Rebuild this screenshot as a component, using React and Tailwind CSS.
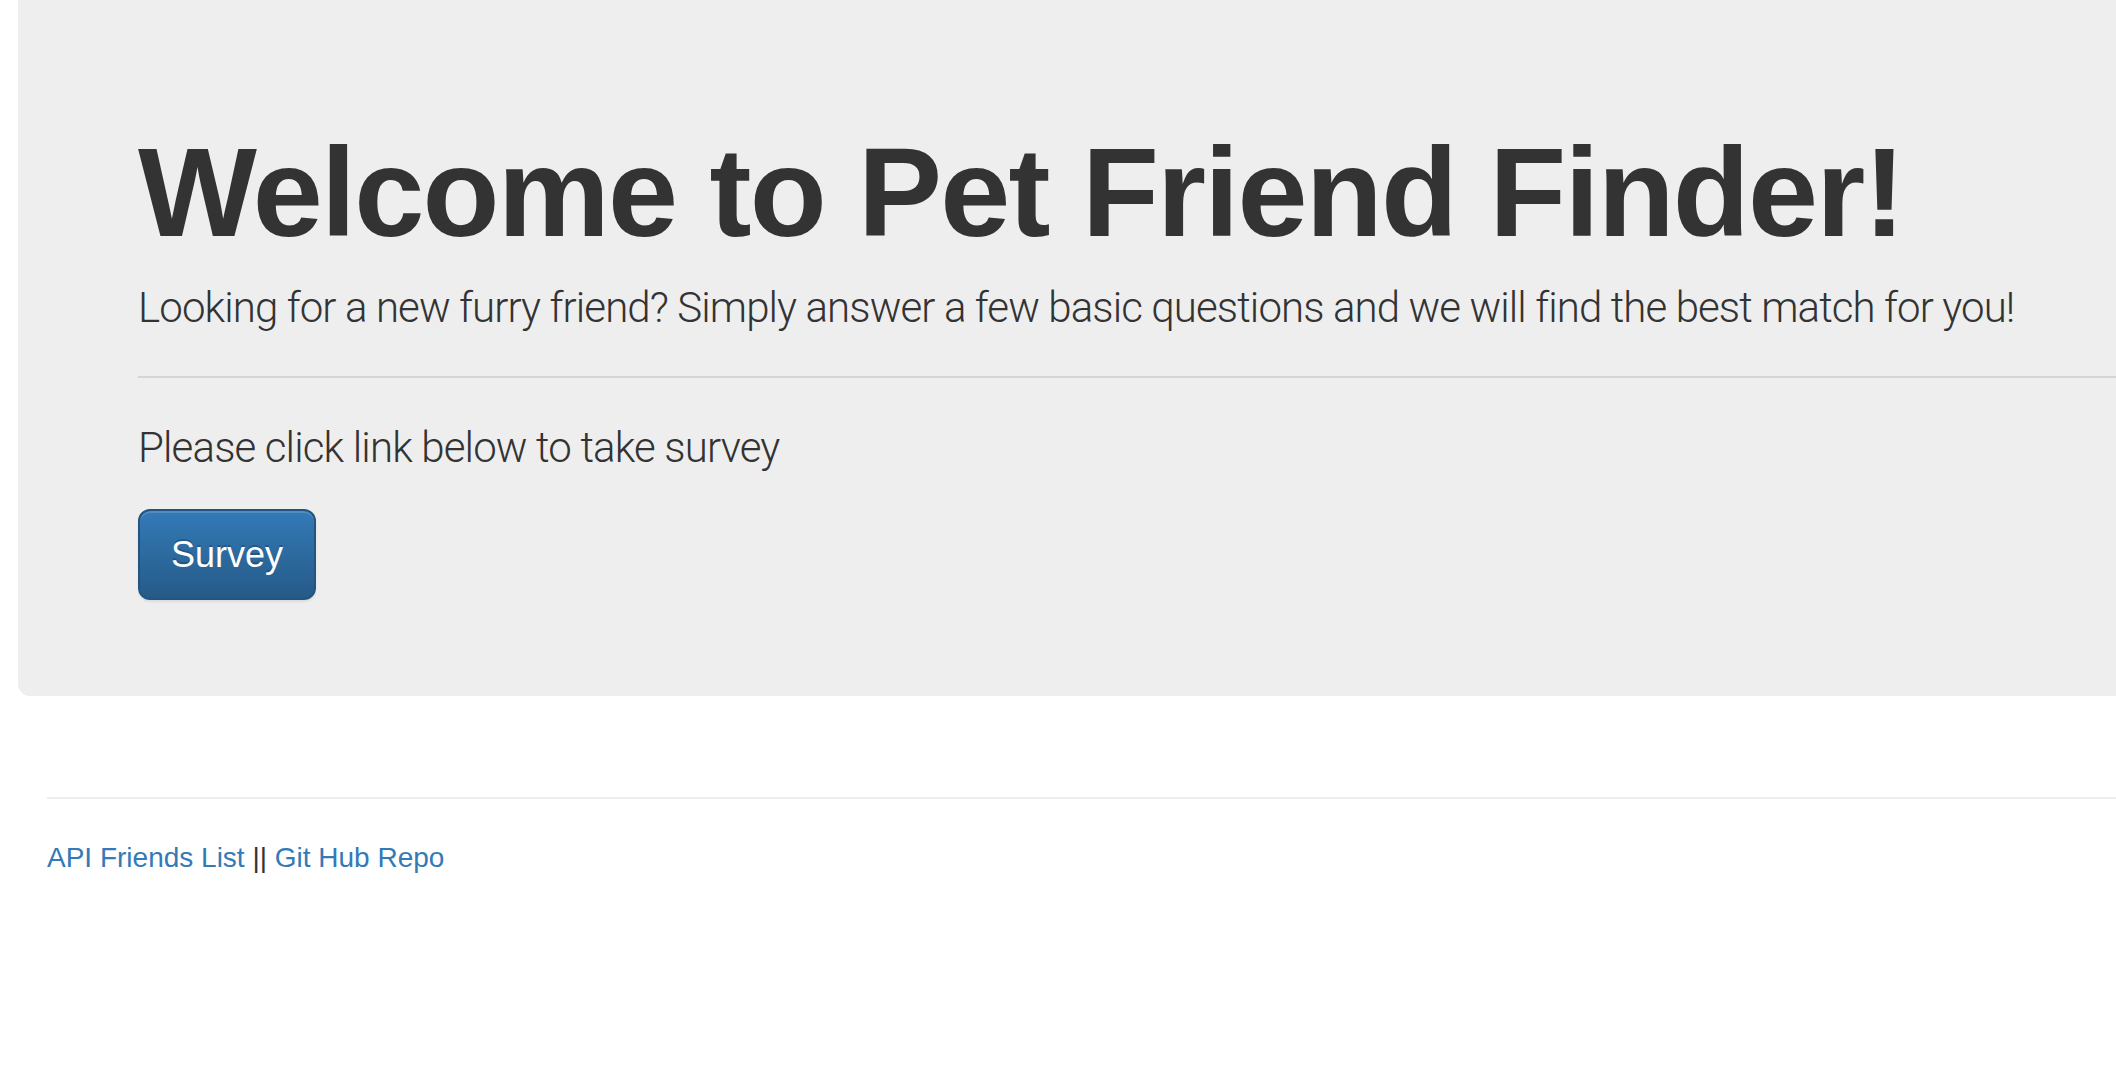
export default function App() {
  return (
    <div className="min-h-[1066px] w-full bg-white overflow-hidden font-['Liberation_Sans',Arial,sans-serif] text-[#333333]">
      <div className="ml-[18px] bg-[#eeeeee] rounded-bl-[12px] pl-[120px] pt-[124px] pb-[96px]">
        <h1 className="m-0 text-[126px] leading-[1.1] font-bold tracking-[-1.8px] text-[#333333] whitespace-nowrap">
          Welcome to Pet Friend Finder!
        </h1>
        <p className="mt-[15px] text-[42px] leading-[60px] font-light tracking-[-0.9px] font-['Roboto',sans-serif] whitespace-nowrap">
          Looking for a new furry friend? Simply answer a few basic questions and we will find the best match for you!
        </p>
        <hr className="mt-[38px] border-0 border-t-2 border-[#d5d5d5]" />
        <p className="mt-[40px] text-[42px] leading-[60px] font-light tracking-[-0.85px] font-['Roboto',sans-serif] whitespace-nowrap">
          Please click link below to take survey
        </p>
        <div className="mt-[31px] flex">
          <a
            href="#"
            className="inline-block h-[91px] px-[31px] text-[36px] leading-[87px] text-white rounded-[12px] border-2 border-[#245580] bg-[linear-gradient(#337ab7,#265a88)] shadow-[inset_0_2px_0_rgba(255,255,255,0.15),0_2px_2px_rgba(0,0,0,0.075)] [text-shadow:0_-2px_0_rgba(0,0,0,0.2)]"
          >
            Survey
          </a>
        </div>
      </div>
      <div className="ml-[47px] pt-[101px]">
        <hr className="border-0 border-t-2 border-[#eeeeee]" />
        <p className="mt-[39px] text-[28px] leading-[40px]">
          <a href="#" className="text-[#337ab7]">API Friends List</a> || <a href="#" className="text-[#337ab7]">Git Hub Repo</a>
        </p>
      </div>
    </div>
  );
}
